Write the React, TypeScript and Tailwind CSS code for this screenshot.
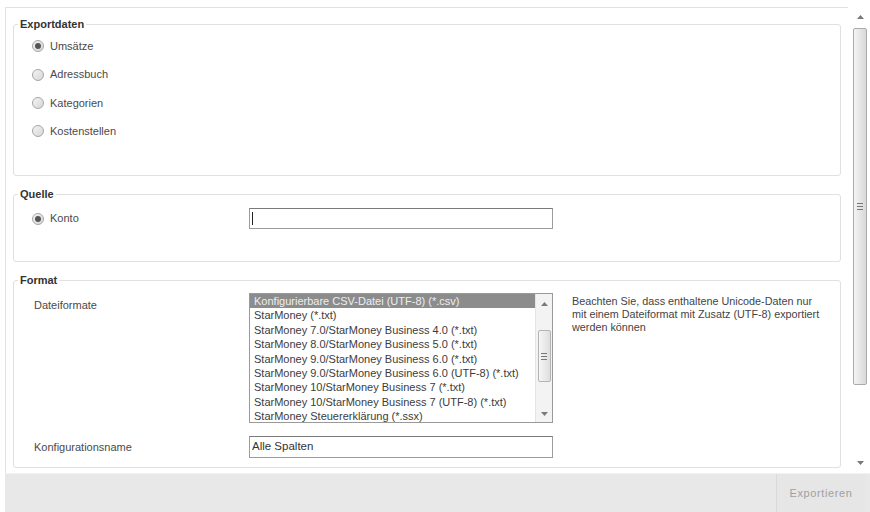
import React from "react";

const FORMATS = [
  "Konfigurierbare CSV-Datei (UTF-8) (*.csv)",
  "StarMoney (*.txt)",
  "StarMoney 7.0/StarMoney Business 4.0 (*.txt)",
  "StarMoney 8.0/StarMoney Business 5.0 (*.txt)",
  "StarMoney 9.0/StarMoney Business 6.0 (*.txt)",
  "StarMoney 9.0/StarMoney Business 6.0 (UTF-8) (*.txt)",
  "StarMoney 10/StarMoney Business 7 (*.txt)",
  "StarMoney 10/StarMoney Business 7 (UTF-8) (*.txt)",
  "StarMoney Steuererklärung (*.ssx)",
];

function Radio({ checked, label }: { checked?: boolean; label: string }) {
  return (
    <div className="flex items-center gap-[6px]">
      <span className="w-[12px] h-[12px] rounded-full border border-[#a6a6a6] bg-gradient-to-br from-[#f4f4f4] to-[#d6d6d6] flex items-center justify-center">
        {checked && <span className="w-[6px] h-[6px] rounded-full bg-[#555]" />}
      </span>
      <span className="text-[11px] text-[#4a4a4a]">{label}</span>
    </div>
  );
}

function Group({
  title,
  className,
  children,
}: {
  title: string;
  className: string;
  children: React.ReactNode;
}) {
  return (
    <fieldset className={`border border-[#e0e0e0] rounded-[3px] ${className}`}>
      <legend className="ml-[4px] px-[2px] text-[11px] leading-[13px] font-bold text-[#333]">
        {title}
      </legend>
      {children}
    </fieldset>
  );
}

function Arrow({ up }: { up?: boolean }) {
  return (
    <svg width="7" height="4" viewBox="0 0 7 4">
      <path d={up ? "M0 4 L3.5 0 L7 4 Z" : "M0 0 L3.5 4 L7 0 Z"} fill="#7a7a7a" />
    </svg>
  );
}

function Grip() {
  return (
    <div className="flex flex-col gap-[2px]">
      <span className="w-[6px] h-[1px] bg-[#777]" />
      <span className="w-[6px] h-[1px] bg-[#777]" />
      <span className="w-[6px] h-[1px] bg-[#777]" />
    </div>
  );
}

export default function App() {
  return (
    <div className="w-[870px] h-[512px] bg-white flex flex-col font-['Liberation_Sans',Arial,sans-serif] text-[#3a3a3a] overflow-hidden">
      <div className="h-[473px] flex">
        {/* Content frame */}
        <div className="mt-[7px] ml-[5px] w-[843px] border-l border-t border-[#e2e2e2] pl-[7px] pr-[7px] pt-[10px] flex flex-col gap-[12px]">
          <Group title="Exportdaten" className="h-[158px]">
            <div className="pl-[18px] mt-[1px] flex flex-col">
              <div className="h-[28px] flex items-center"><Radio checked label="Umsätze" /></div>
              <div className="h-[29px] flex items-center"><Radio label="Adressbuch" /></div>
              <div className="h-[28px] flex items-center"><Radio label="Kategorien" /></div>
              <div className="h-[28px] flex items-center"><Radio label="Kostenstellen" /></div>
            </div>
          </Group>

          <Group title="Quelle" className="h-[74px]">
            <div className="mt-[7px] flex items-center">
              <div className="w-[235px] pl-[18px]">
                <Radio checked label="Konto" />
              </div>
              <div className="w-[304px] h-[21px] border border-[#9c9c9c] border-t-[#7a7a7a] bg-white flex items-center pl-[2px]">
                <span className="w-[1px] h-[13px] bg-[#222]" />
              </div>
            </div>
          </Group>

          <Group title="Format" className="h-[194px]">
            <div className="mt-[6px] flex">
              <div className="w-[235px] pl-[20px] pt-[4px] text-[11px] text-[#4a4a4a]">Dateiformate</div>
              <div className="w-[304px] h-[130px] border border-[#9a9a9a] bg-white flex">
                <div className="flex-1 overflow-hidden">
                  {FORMATS.map((f, i) => (
                    <div
                      key={f}
                      className={`h-[14.4px] leading-[14.4px] pl-[4px] text-[11px] whitespace-nowrap ${
                        i === 0 ? "bg-[#8c8c8c] text-[#eeeeee]" : "text-[#3c3c3c]"
                      }`}
                    >
                      {f}
                    </div>
                  ))}
                </div>
                <div className="w-[17px] bg-[#f3f3f3] border-l border-[#e4e4e4] flex flex-col items-center">
                  <div className="h-[16px] flex items-center justify-center mt-[2px]"><Arrow up /></div>
                  <div className="mt-[18px] w-[13px] h-[52px] rounded-[2px] border border-[#b4b4b4] bg-gradient-to-r from-[#f6f6f6] to-[#dedede] flex items-center justify-center">
                    <Grip />
                  </div>
                  <div className="flex-1" />
                  <div className="h-[16px] flex items-center justify-center"><Arrow /></div>
                </div>
              </div>
              <div className="ml-[19px] pt-[2px] text-[10.8px] leading-[13px] text-[#444]">
                Beachten Sie, dass enthaltene Unicode-Daten nur
                <br />
                mit einem Dateiformat mit Zusatz (UTF-8) exportiert
                <br />
                werden können
              </div>
            </div>
            <div className="mt-[13px] flex items-center">
              <div className="w-[235px] pl-[20px] text-[11px] text-[#4a4a4a]">Konfigurationsname</div>
              <div className="w-[304px] h-[22px] border border-[#9c9c9c] border-t-[#7a7a7a] bg-white flex items-center pl-[2px] text-[11.5px] text-[#333]">
                Alle Spalten
              </div>
            </div>
          </Group>
        </div>

        {/* Main scrollbar */}
        <div className="ml-[5px] mt-[8px] w-[14px] h-[462px] flex flex-col items-center">
          <div className="h-[18px] flex items-center justify-center"><Arrow up /></div>
          <div className="mt-[2px] w-[14px] h-[357px] rounded-[2px] border border-[#ababab] bg-gradient-to-r from-[#f4f4f4] to-[#d8d8d8] flex items-center justify-center">
            <Grip />
          </div>
          <div className="flex-1" />
          <div className="h-[14px] flex items-center justify-center"><Arrow /></div>
        </div>
      </div>

      {/* Bottom bar */}
      <div className="ml-[5px] h-[39px] bg-[#e8e8e8] border-t border-[#f2f2f2] flex justify-end">
        <button
          type="button"
          disabled
          className="w-[89px] mr-[5px] h-full bg-[#e6e6e6] border-l border-[#d9d9d9] text-[11px] text-[#a0a0a0] tracking-[0.6px]"
        >
          Exportieren
        </button>
      </div>
    </div>
  );
}
